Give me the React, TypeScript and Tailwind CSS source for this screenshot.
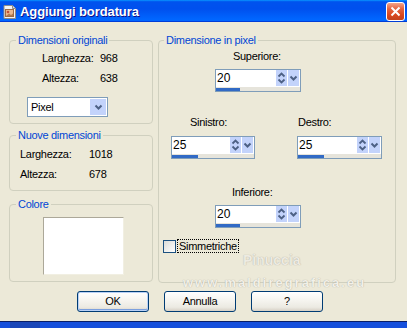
import React from "react";

function SpinArrows() {
  return (
    <svg width="11" height="16" viewBox="0 0 11 16">
      <path d="M2.5 6.5 L5.5 3.5 L8.5 6.5" fill="none" stroke="#4D6185" strokeWidth="1.8" />
      <path d="M2.5 9.5 L5.5 12.5 L8.5 9.5" fill="none" stroke="#4D6185" strokeWidth="1.8" />
    </svg>
  );
}

function DropArrow() {
  return (
    <svg width="11" height="16" viewBox="0 0 11 16">
      <path d="M2.5 6.5 L5.5 9.5 L8.5 6.5" fill="none" stroke="#4D6185" strokeWidth="2" />
    </svg>
  );
}

function SpinBox({ value, w, bar }: { value: string; w: string; bar: string }) {
  return (
    <div className={`${w} h-[23px] flex flex-col border border-[#7F9DB9] bg-white`}>
      <div className="h-[17px] flex items-start">
        <div className="flex-1 h-[17px] pl-[1px] flex items-center text-[12px] tracking-normal">{value}</div>
        <div className="w-[11px] h-[16px] bg-[#C3D3FB] flex items-center justify-center">
          <SpinArrows />
        </div>
        <div className="w-[11px] h-[16px] ml-[1px] mr-[1px] bg-[#C3D3FB] flex items-center justify-center">
          <DropArrow />
        </div>
      </div>
      <div className="h-[4px] bg-[#E6E4DB] flex items-end">
        <div className={`${bar} h-[3px] bg-[#316AC5]`} />
      </div>
    </div>
  );
}

function Group({
  title,
  className,
  children,
  legendMl = "ml-[6px]",
}: {
  title: string;
  className: string;
  children: React.ReactNode;
  legendMl?: string;
}) {
  return (
    <fieldset className={`border border-[#D0D0BF] rounded-[4px] p-0 m-0 min-w-0 ${className}`}>
      <legend className={`${legendMl} px-[2px] text-[#0046D5] leading-[13px]`}>{title}</legend>
      {children}
    </fieldset>
  );
}

function XPButton({ label, primary = false }: { label: string; primary?: boolean }) {
  return (
    <div
      className={`w-[72px] h-[21px] rounded-[3px] border border-[#003C74] flex items-center justify-center bg-[linear-gradient(180deg,#FFFFFF_0%,#F5F4EF_45%,#ECEAE2_80%,#D6D0C5_100%)] ${
        primary ? "shadow-[inset_0_0_0_1px_#B9D1F6,inset_0_-1px_0_1px_#7CA0DE]" : ""
      }`}
    >
      {label}
    </div>
  );
}

export default function App() {
  return (
    <div className="w-[407px] h-[328px] flex flex-col overflow-hidden bg-[#ECE9D8] font-['Liberation_Sans',Arial,sans-serif] text-[11px] leading-[13px] tracking-[-0.3px] text-black">
      {/* Title bar */}
      <div className="h-[22px] flex items-center pl-[2px] pr-[2px] bg-[linear-gradient(180deg,#0997FF,#0053EE_8%,#0050EE_40%,#0066FF_88%,#0066FF_93%,#005BFF_95%,#003DD7_96%,#003DD7)]">
        <svg width="16" height="16" viewBox="0 0 16 16" className="mt-[1px]">
          <path d="M2 1.5 H10.5 L13.5 4.5 V14.5 H2 Z" fill="#F4F4F4" stroke="#8A8A8A" />
          <path d="M10.5 1.5 V4.5 H13.5" fill="#DADADA" stroke="#8A8A8A" />
          <rect x="3.5" y="5.5" width="8" height="7" fill="#E9B98E" stroke="#9C6A45" />
          <circle cx="6" cy="8" r="1.3" fill="#C0503A" />
          <path d="M4 12 L7 9.5 L9 11 L11 9.5 V12 Z" fill="#B07A50" />
        </svg>
        <span className="ml-[2px] text-white font-bold text-[13px] tracking-[-0.1px] [text-shadow:1px_1px_#0F1089]">
          Aggiungi bordatura
        </span>
        <div className="ml-auto w-[19px] h-[19px] rounded-[3px] border border-white bg-[linear-gradient(180deg,#F3A48B_0%,#E4633F_35%,#D9481F_70%,#C2421E_100%)] flex items-center justify-center">
          <svg width="11" height="11" viewBox="0 0 11 11">
            <path d="M1.5 1.5 L9.5 9.5 M9.5 1.5 L1.5 9.5" stroke="white" strokeWidth="2" />
          </svg>
        </div>
      </div>

      {/* Body */}
      <div className="relative h-[299px] flex flex-col pt-[12px]">
        <div className="flex pl-[9px]">
          {/* Left column */}
          <div className="w-[144px] flex flex-col">
            <Group title="Dimensioni originali" className="h-[90px]">
              <div className="pl-[32px] pt-[5px] flex flex-col gap-[7px]">
                <div className="flex">
                  <span className="w-[58px]">Larghezza:</span>
                  <span>968</span>
                </div>
                <div className="flex">
                  <span className="w-[58px]">Altezza:</span>
                  <span>638</span>
                </div>
              </div>
              <div className="ml-[17px] mt-[12px] w-[81px] h-[20px] border border-[#7F9DB9] bg-white flex items-center">
                <span className="flex-1 pl-[3px]">Pixel</span>
                <div className="w-[16px] h-[16px] mr-[1px] bg-[#C3D3FB] flex items-center justify-center">
                  <DropArrow />
                </div>
              </div>
            </Group>
            <Group title="Nuove dimensioni" className="h-[62px] mt-[5px]">
              <div className="pl-[10px] pt-[6px] flex flex-col gap-[7px]">
                <div className="flex">
                  <span className="w-[69px]">Larghezza:</span>
                  <span>1018</span>
                </div>
                <div className="flex">
                  <span className="w-[69px]">Altezza:</span>
                  <span>678</span>
                </div>
              </div>
            </Group>
            <Group title="Colore" className="h-[84px] mt-[7px]">
              <div className="pl-[33px] pt-[6px]">
                <div className="w-[81px] h-[58px] bg-white border border-t-[#ACA899] border-l-[#ACA899] border-r-[#F1EFE2] border-b-[#F1EFE2]" />
              </div>
            </Group>
          </div>

          {/* Right group */}
          <Group title="Dimensione in pixel" className="w-[238px] h-[249px] ml-[5px]" legendMl="ml-[5px]">
            <div className="flex flex-col pt-[3px]">
              <div className="ml-[56px] flex flex-col">
                <span className="ml-[18px]">Superiore:</span>
                <div className="mt-[6px]">
                  <SpinBox value="20" w="w-[86px]" bar="w-[24px]" />
                </div>
              </div>
              <div className="flex mt-[24px]">
                <div className="ml-[12px] flex flex-col">
                  <span className="ml-[19px]">Sinistro:</span>
                  <div className="mt-[7px]">
                    <SpinBox value="25" w="w-[84px]" bar="w-[26px]" />
                  </div>
                </div>
                <div className="ml-[42px] flex flex-col">
                  <span className="ml-[1px]">Destro:</span>
                  <div className="mt-[7px]">
                    <SpinBox value="25" w="w-[85px]" bar="w-[26px]" />
                  </div>
                </div>
              </div>
              <div className="ml-[56px] mt-[27px] flex flex-col">
                <span className="ml-[17px]">Inferiore:</span>
                <div className="mt-[6px]">
                  <SpinBox value="20" w="w-[86px]" bar="w-[24px]" />
                </div>
              </div>
              <div className="ml-[4px] mt-[11px] flex items-center">
                <div className="w-[13px] h-[13px] border border-[#1C5180] bg-[linear-gradient(135deg,#DCDCD7,#FFFFFF)]" />
                <span className="ml-[1px] px-[1px] border border-dotted border-black leading-[12px]">Simmetriche</span>
              </div>
            </div>
          </Group>
        </div>

        {/* Buttons */}
        <div className="flex pl-[77px] gap-[15px] mt-[8px]">
          <XPButton label="OK" primary />
          <XPButton label="Annulla" />
          <XPButton label="?" />
        </div>

        {/* Watermark */}
        <span className="absolute left-[243px] top-[232px] text-[14px] font-bold tracking-[0px] text-[#EEEBE2] [text-shadow:0_0_1px_#A19E93]">
          Pinuccia
        </span>
        <span className="absolute left-[183px] top-[254px] text-[13px] font-bold tracking-[2px] text-[#F2F0E8] [text-shadow:0_0_1px_#A19E93]">
          www.maldiregrafica.eu
        </span>
      </div>

      {/* Bottom strip */}
      <div className="h-[7px] border-t border-[#0A1E66] bg-[#1650DC] flex">
        <div className="ml-[10px] w-[30px] h-[6px] bg-[#1A47B8]" />
      </div>
    </div>
  );
}
